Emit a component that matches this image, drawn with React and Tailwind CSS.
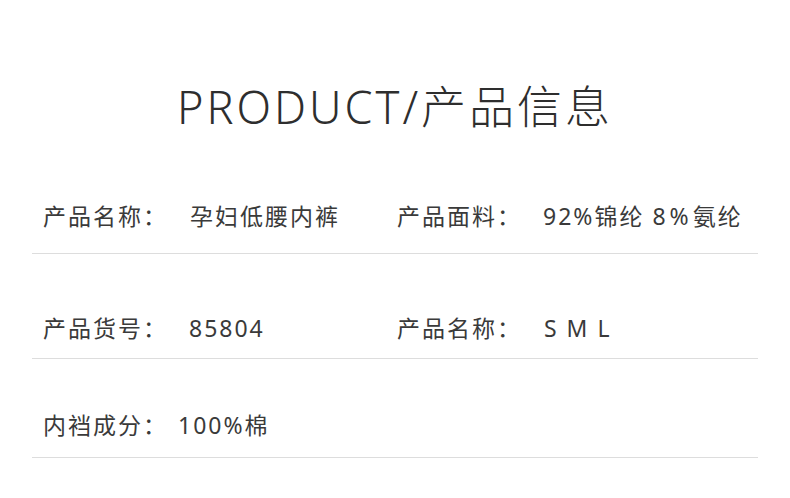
export default function App() {
  const font = { fontFamily: '"Noto Sans", "Noto Sans CJK SC", sans-serif' };
  return (
    <div className="w-[790px] h-[498px] bg-white text-[#3a3a3a] overflow-hidden" style={font}>
      <div className="pt-[84px] text-center text-[45px] leading-[45px] font-light text-[#2e2e2e] tracking-[3px] whitespace-nowrap font-['Noto_Sans','Noto_Sans_CJK_SC',sans-serif]">
        PRODUCT/产品信息
      </div>
      <div className="mx-[32px] mt-[72px] text-[23px] leading-[30px] tracking-[2px] whitespace-nowrap font-['Noto_Sans','Noto_Sans_CJK_SC',sans-serif]">
        <div className="flex pl-[11px] pb-[22px] border-b border-[#dddddd]">
          <div className="flex w-[354px] shrink-0">
            <span>产品名称：</span>
            <span className="ml-[22px]">孕妇低腰内裤</span>
          </div>
          <div className="flex shrink-0">
            <span>产品面料：</span>
            <span className="ml-[21px] flex">
              <span>92%锦纶 8</span>
              <span className="ml-[2px]">%</span>
              <span className="ml-[2px]">氨纶</span>
            </span>
          </div>
        </div>
        <div className="flex pl-[11px] pt-[59px] pb-[15px] border-b border-[#dddddd]">
          <div className="flex w-[354px] shrink-0">
            <span>产品货号：</span>
            <span className="ml-[21px]">85804</span>
          </div>
          <div className="flex shrink-0">
            <span>产品名称：</span>
            <span className="ml-[22px]">S M L</span>
          </div>
        </div>
        <div className="flex pl-[11px] pt-[51px] pb-[17px] border-b border-[#dddddd]">
          <div className="flex w-[354px] shrink-0">
            <span>内裆成分：</span>
            <span className="ml-[10px]">100%棉</span>
          </div>
        </div>
      </div>
    </div>
  );
}
